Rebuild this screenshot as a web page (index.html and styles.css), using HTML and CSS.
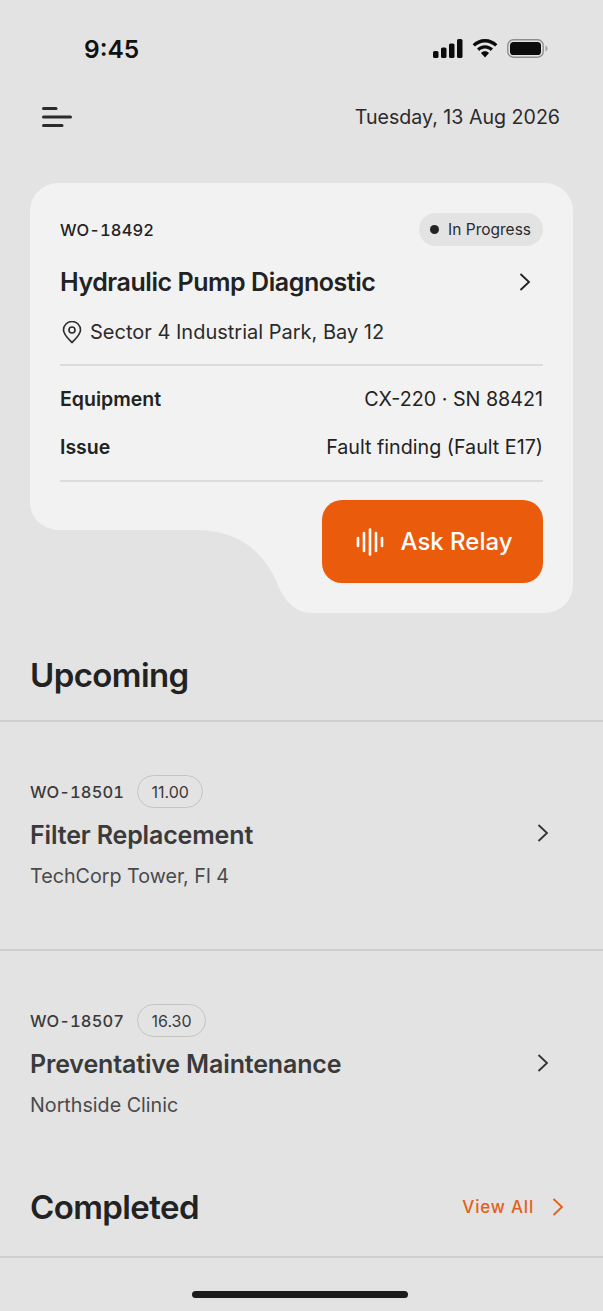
FILE: index.html
```html
<!DOCTYPE html>
<html lang="en">
<head>
    <meta charset="UTF-8">
    <meta name="viewport" content="width=device-width, initial-scale=1.0">
    <title>Work Orders</title>
    <link rel="stylesheet" href="styles.css">
</head>
<body>
    <div class="screen">
        <div class="status-bar">
            <span class="time">9:45</span>
            <div class="status-icons">
                <svg width="30" height="19" viewBox="0 0 30 19" fill="#0b0b0b"><rect x="0" y="12" width="5.5" height="7" rx="1.6"/><rect x="8" y="8.5" width="5.5" height="10.5" rx="1.6"/><rect x="16" y="4.5" width="5.5" height="14.5" rx="1.6"/><rect x="24" y="0" width="5.5" height="19" rx="1.6"/></svg>
                <svg width="26" height="19" viewBox="0 0 26 19" fill="#0b0b0b"><path d="M13 0C8 0 3.800 2 .6 5.200l2.300 2.400C5.500 5 9 3.400 13 3.400s7.500 1.600 10.100 4.200l2.300-2.400C22.200 2 18 0 13 0z"/><path d="M13 6.200c-3.200 0-6 1.300-8 3.300l2.300 2.400c1.500-1.400 3.500-2.300 5.700-2.300s4.200.9 5.700 2.300L21 9.500c-2-2-4.800-3.300-8-3.300z"/><path d="M13 12.300c-1.600 0-3 .6-4 1.700l4 4.600 4-4.600c-1-1.100-2.400-1.700-4-1.700z"/></svg>
                <svg width="41" height="19" viewBox="0 0 41 19"><rect x=".8" y=".8" width="35.400" height="17.400" rx="5.500" fill="none" stroke="#8e8e8e" stroke-width="1.400"/><rect x="3" y="3" width="31" height="13" rx="3.600" fill="#0b0b0b"/><path d="M38.500 6.500c1.300.4 2 1.600 2 3s-.7 2.600-2 3z" fill="#a0a0a0"/></svg>
            </div>
        </div>

        <header class="top-bar">
            <svg class="menu-icon" width="30" height="22" viewBox="0 0 30 22" fill="none" stroke="#2b2b2b" stroke-width="3" stroke-linecap="round"><path d="M1.500 2.500H14"/><path d="M1.500 11H28.500"/><path d="M1.500 19.500H20"/></svg>
            <span class="date">Tuesday, 13 Aug 2026</span>
        </header>

        <section class="job-card">
            <svg class="job-card-bg" width="543" height="430" viewBox="0 0 543 430"><path fill="#f2f2f2" d="M28 0H515a28 28 0 0 1 28 28V402a28 28 0 0 1-28 28H281C266 430 254 418 247 400C234 368 207 347 166 347H28a28 28 0 0 1-28-28V28A28 28 0 0 1 28 0z"/></svg>
            <div class="job-top">
                <span class="wo-code">WO-18492</span>
                <span class="status-pill"><i class="dot"></i>In Progress</span>
            </div>
            <div class="job-title-row">
                <h1 class="job-title">Hydraulic Pump Diagnostic</h1>
                <svg class="chevron" width="12" height="18" viewBox="0 0 12 18" fill="none" stroke="#222" stroke-width="1.800"><path d="M1.500 1l8.500 8-8.500 8"/></svg>
            </div>
            <div class="job-location">
                <svg width="20" height="23" viewBox="0 0 20 23" fill="none" stroke="#2b2b2b" stroke-width="1.600"><path d="M10 21.500C6 17.500 1.500 13.500 1.500 9a8.500 8.500 0 0 1 17 0c0 4.500-4.500 8.500-8.500 12.500z"/><circle cx="10" cy="9" r="3"/></svg>
                <span>Sector 4 Industrial Park, Bay 12</span>
            </div>
            <div class="job-details">
                <div class="detail-row"><span class="detail-label">Equipment</span><span>CX-220 · SN 88421</span></div>
                <div class="detail-row"><span class="detail-label">Issue</span><span>Fault finding (Fault E17)</span></div>
            </div>
            <button class="ask-btn">
                <svg width="28" height="28" viewBox="0 0 28 28" fill="none" stroke="#fff" stroke-width="2.600" stroke-linecap="round"><path d="M2 10v8"/><path d="M8 5v18"/><path d="M14 1.500v25"/><path d="M20 5v18"/><path d="M26 10v8"/></svg>
                Ask Relay
            </button>
        </section>

        <h2 class="section-title upcoming-title">Upcoming</h2>

        <div class="order-list">
            <div class="order">
                <div class="order-info">
                    <div class="order-meta"><span class="wo-code muted">WO-18501</span><span class="time-tag">11.00</span></div>
                    <div class="order-title">Filter Replacement</div>
                    <div class="order-place">TechCorp Tower, Fl 4</div>
                </div>
                <svg class="chevron" width="12" height="18" viewBox="0 0 12 18" fill="none" stroke="#333" stroke-width="1.800"><path d="M1.500 1l8.500 8-8.500 8"/></svg>
            </div>
            <div class="order">
                <div class="order-info">
                    <div class="order-meta"><span class="wo-code muted">WO-18507</span><span class="time-tag">16.30</span></div>
                    <div class="order-title">Preventative Maintenance</div>
                    <div class="order-place">Northside Clinic</div>
                </div>
                <svg class="chevron" width="12" height="18" viewBox="0 0 12 18" fill="none" stroke="#333" stroke-width="1.800"><path d="M1.500 1l8.500 8-8.500 8"/></svg>
            </div>
        </div>

        <div class="completed-head">
            <h2 class="section-title">Completed</h2>
            <a class="view-all">View All
                <svg width="12" height="18" viewBox="0 0 12 18" fill="none" stroke="#e2601a" stroke-width="1.800"><path d="M1.500 1l8.500 8-8.500 8"/></svg>
            </a>
        </div>

        <div class="home-bar"></div>
    </div>
</body>
</html>
```

FILE: styles.css
```css
/* General Styling */
* {
    box-sizing: border-box;
}

body {
    margin: 0;
    background: #e3e3e3;
    color: #222;
    font-family: 'Inter', 'Noto Sans', sans-serif;
}

.screen {
    position: relative;
    width: 603px;
    height: 1311px;
    overflow: hidden;
}

/* Status bar */
.status-bar {
    height: 98px;
    padding: 35px 55px 0 84px;
    display: flex;
    justify-content: space-between;
    align-items: flex-start;
}

.time {
    font-size: 24.5px;
    font-weight: 600;
    line-height: 28px;
    color: #111;
}

.status-icons {
    display: flex;
    align-items: center;
    gap: 9px;
    margin-top: 4px;
}

/* Header */
.top-bar {
    height: 38px;
    padding: 0 43px 0 42px;
    display: flex;
    justify-content: space-between;
    align-items: center;
}

.date {
    font-size: 19.6px;
    color: #2b2b2b;
}

/* Main card */
.job-card {
    position: relative;
    width: 543px;
    height: 430px;
    margin: 47px 0 0 30px;
    padding: 30px 30px 0;
}

.job-card-bg {
    position: absolute;
    top: 0;
    left: 0;
    z-index: -1;
}

.job-top {
    display: flex;
    justify-content: space-between;
    align-items: center;
    height: 33px;
}

.wo-code {
    font-size: 16.5px;
    font-weight: 500;
    letter-spacing: 0.1px;
    font-variant-numeric: tabular-nums;
}

.wo-code.muted {
    color: #3a3a3a;
}

.status-pill {
    display: flex;
    align-items: center;
    gap: 9px;
    height: 33px;
    padding: 0 12px 0 11.5px;
    border-radius: 17px;
    background: #e3e3e3;
    font-size: 15.5px;
    color: #2b2b2b;
}

.dot {
    width: 9px;
    height: 9px;
    border-radius: 50%;
    background: #222;
}

.job-title-row {
    display: flex;
    justify-content: space-between;
    align-items: center;
    height: 40px;
    margin-top: 16px;
    padding-right: 12px;
}

.job-title {
    margin: 0;
    font-size: 25px;
    font-weight: 600;
    letter-spacing: -0.45px;
}

.job-location {
    display: flex;
    align-items: center;
    gap: 8px;
    height: 30px;
    margin-top: 15px;
    padding-left: 2px;
    font-size: 20px;
    color: #2b2b2b;
}

.job-details {
    margin-top: 17px;
    padding: 9px 0;
    border-top: 2px solid #dcdcdc;
    border-bottom: 2px solid #dcdcdc;
    font-size: 19.7px;
}

.detail-row {
    display: flex;
    justify-content: space-between;
    align-items: center;
    height: 48px;
}

.detail-label {
    font-weight: 600;
    font-size: 19.5px;
}

.ask-btn {
    display: flex;
    align-items: center;
    justify-content: center;
    gap: 16px;
    width: 221px;
    height: 83px;
    margin: 18px 0 0 auto;
    padding: 0 0 0 4px;
    border: none;
    border-radius: 20px;
    background: #ea5b0c;
    color: #fff;
    font-family: inherit;
    font-size: 24px;
    font-weight: 500;
}

/* Sections */
.section-title {
    margin: 0;
    font-size: 33px;
    font-weight: 600;
    letter-spacing: -0.6px;
}

.upcoming-title {
    height: 109px;
    padding: 40px 30px 0;
    line-height: 44px;
    border-bottom: 2px solid #cfcfcf;
}

.order {
    display: flex;
    justify-content: space-between;
    align-items: center;
    height: 229px;
    padding: 0 54px 0 30px;
    border-bottom: 2px solid #cfcfcf;
}

.order:last-child {
    border-bottom: none;
}

.order-info {
    align-self: flex-start;
    padding-top: 53px;
}

.order .chevron {
    margin-bottom: 6px;
}

.order-meta {
    display: flex;
    align-items: center;
    gap: 13px;
    height: 33px;
}

.time-tag {
    display: flex;
    align-items: center;
    height: 33px;
    padding: 0 13.5px;
    border: 1.5px solid #c4c4bf;
    border-radius: 17px;
    font-size: 16px;
    color: #3a3a3a;
}

.order-title {
    margin-top: 12px;
    font-size: 25px;
    font-weight: 600;
    letter-spacing: -0.15px;
    color: #3a3a3a;
}

.order-place {
    margin-top: 14px;
    font-size: 19.7px;
    color: #4a4a4a;
}

.completed-head {
    display: flex;
    justify-content: space-between;
    align-items: center;
    height: 88px;
    margin-top: -10px;
    padding: 0 39px 12px 30px;
    border-bottom: 2px solid #cfcfcf;
}

.view-all {
    display: flex;
    align-items: center;
    gap: 18px;
    font-size: 17px;
    font-weight: 500;
    letter-spacing: 0.8px;
    color: #e2601a;
}

.home-bar {
    position: absolute;
    left: 192px;
    bottom: 13px;
    width: 216px;
    height: 7px;
    border-radius: 4px;
    background: #1c1c1c;
}
```
